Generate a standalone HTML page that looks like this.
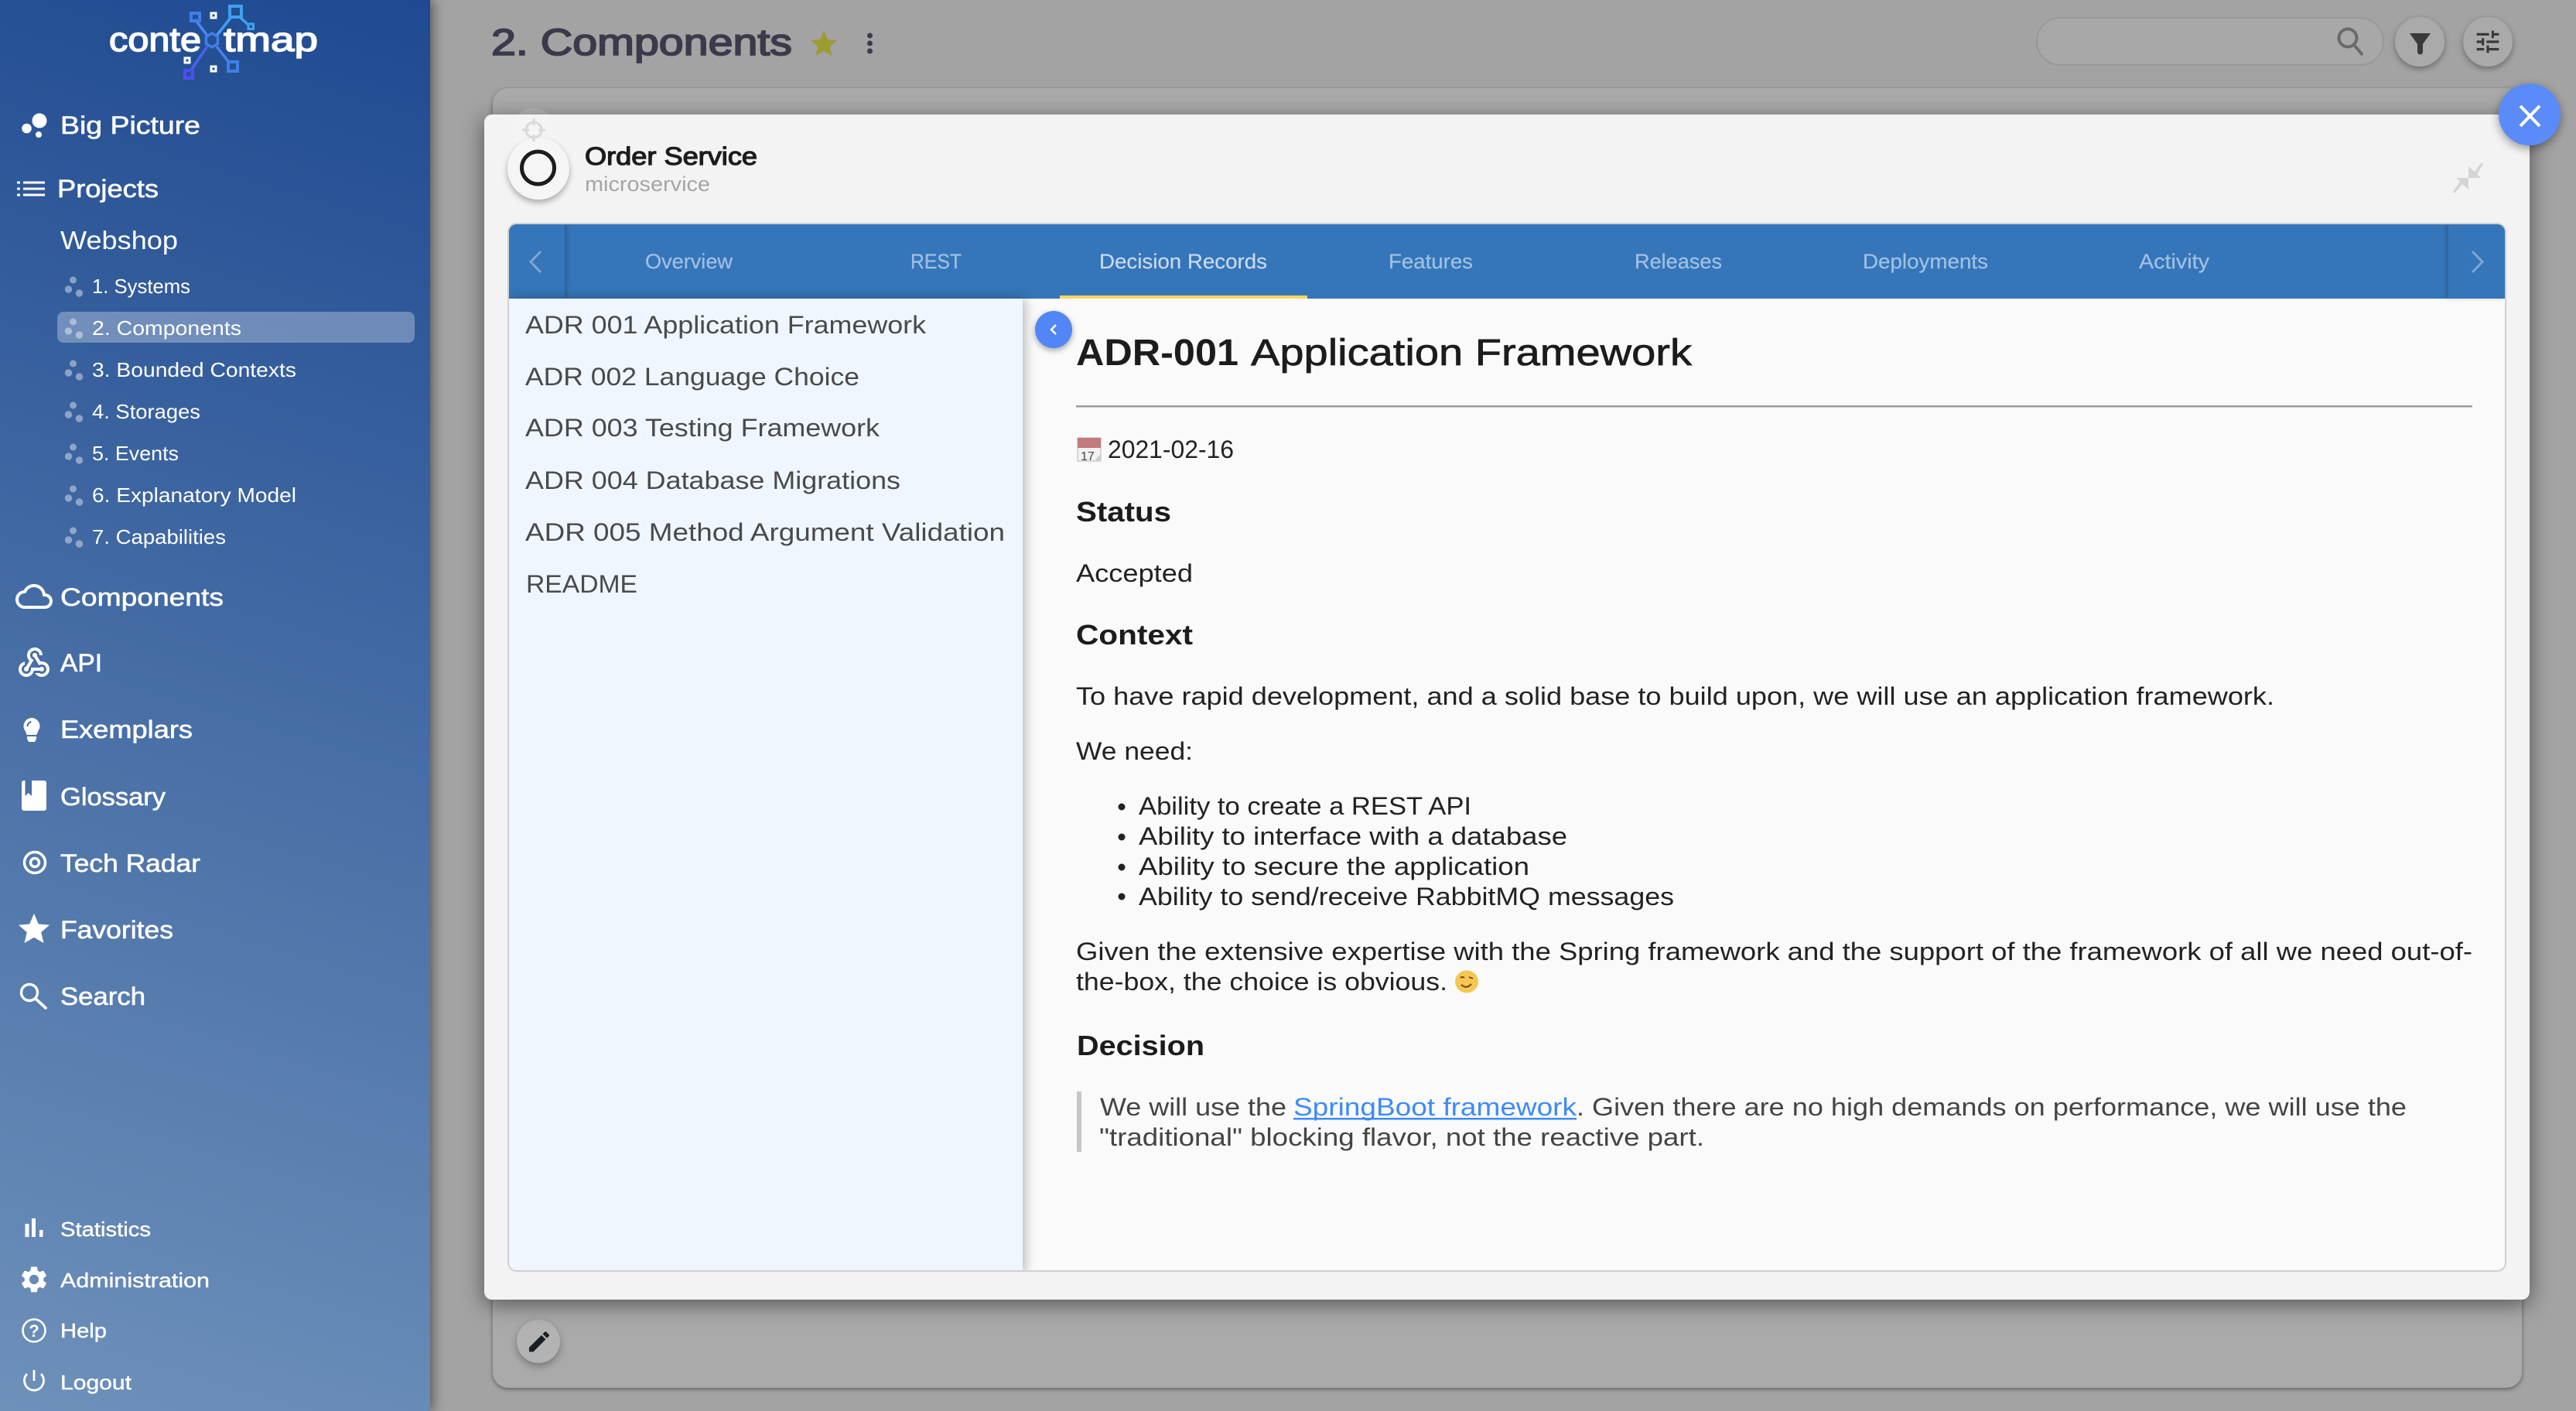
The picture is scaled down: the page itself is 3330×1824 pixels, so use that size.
<!DOCTYPE html>
<html><head><meta charset="utf-8"><title>Order Service</title>
<style>
html,body{margin:0;padding:0;width:3330px;height:1824px;overflow:hidden;background:#a3a3a3}
div{position:absolute;box-sizing:border-box}
svg{position:absolute;left:0;top:0}
text{font-family:"Liberation Sans",sans-serif;white-space:pre}
.nav{font-size:32px;fill:#fff;stroke:#fff;stroke-width:.6}
.sub{font-size:26px;fill:#fff}
.sm{font-size:26px;fill:#fff;stroke:#fff;stroke-width:.4}
.tab{font-size:27px;fill:#a0c0e2;stroke:#a0c0e2;stroke-width:.25}
.li{font-size:32px;fill:#4a4a4a}
.b{font-size:32px;fill:#222}
.q{font-size:32px;fill:#444}
.h{font-size:36px;font-weight:bold;fill:#1c1c1c}
</style></head><body>
<div style="left:556px;top:0;width:2774px;height:1824px;background:#a3a3a3"></div>
<div style="left:637px;top:114px;width:2623px;height:1680px;background:#aaa;border-radius:20px;box-shadow:0 2px 6px rgba(0,0,0,.4)"></div>
<div style="left:2632px;top:22px;width:450px;height:63px;border:2px solid #989898;border-radius:32px;background:#a8a8a8"></div>
<div style="left:3096px;top:22px;width:64px;height:64px;border-radius:50%;background:#aaa;box-shadow:0 3px 8px rgba(0,0,0,.35)"></div>
<div style="left:3184px;top:22px;width:64px;height:64px;border-radius:50%;background:#aaa;box-shadow:0 3px 8px rgba(0,0,0,.35)"></div>
<div style="left:668px;top:1706px;width:56px;height:56px;border-radius:50%;background:#b3b3b3;box-shadow:0 4px 10px rgba(0,0,0,.3)"></div>
<div style="left:0;top:0;width:556px;height:1824px;background:linear-gradient(197deg,#1f4a91 0%,#6e91ba 100%);box-shadow:4px 0 14px rgba(0,0,0,.45)"></div>
<div style="left:74px;top:403px;width:462px;height:40px;border-radius:8px;background:rgba(255,255,255,.3)"></div>
<!-- modal -->
<div style="left:626px;top:148px;width:2644px;height:1532px;background:#f3f3f3;border-radius:10px;box-shadow:0 6px 28px rgba(0,0,0,.5)"></div>
<div style="left:656px;top:288px;width:2584px;height:1356px;border:2px solid #cfcfcf;border-radius:12px;background:#fafafa;overflow:hidden">
  <div style="left:0;top:0;width:2580px;height:96px;background:#3575b9"></div>
  <div style="left:0;top:0;width:72px;height:96px;background:#3575b9;box-shadow:3px 0 5px rgba(0,0,0,.18)"></div>
  <div style="left:2507px;top:0;width:73px;height:96px;background:#3575b9;box-shadow:-3px 0 5px rgba(0,0,0,.18)"></div>
  <div style="left:712px;top:92px;width:320px;height:4px;background:#fdd663"></div>
  <div style="left:0;top:96px;width:664px;height:1260px;background:#eff6ff;box-shadow:3px 0 14px rgba(0,0,0,.28)"></div>
</div>
<div style="left:656px;top:178px;width:80px;height:80px;border-radius:50%;background:#f5f5f5;box-shadow:0 4px 8px rgba(0,0,0,.3)"></div>
<div style="left:662px;top:140px;width:56px;height:56px;border-radius:50%;background:rgba(255,255,255,.12)"></div>
<div style="left:1338px;top:402px;width:48px;height:48px;border-radius:50%;background:#5285f5;box-shadow:0 3px 8px rgba(0,0,0,.35)"></div>
<div style="left:3230px;top:108px;width:80px;height:80px;border-radius:50%;background:#5a8bf8;box-shadow:0 4px 12px rgba(0,0,0,.4)"></div>

<svg width="3330" height="1824" viewBox="0 0 3330 1824" xmlns="http://www.w3.org/2000/svg">
<!-- logo -->
<g fill="none" stroke-width="3.5">
<path d="M252 25L268 46" stroke="#4a8af0"/><path d="M280 46L299 22M310 22L322 33" stroke="#40a0f0"/>
<path d="M268 60L246 92" stroke="#4a62f0"/><path d="M280 60L297 82" stroke="#4a80ee"/>
<path d="M274 43l7.500 4.500v9l-7.500 4.500l-7.500-4.500v-9z" stroke="#3f7fe8"/>
<rect x="247" y="17" width="11" height="10" stroke="#3f7fe8" stroke-width="4"/>
<rect x="297" y="8" width="15" height="14" stroke="#40a0f0" stroke-width="4"/>
<rect x="321" y="31" width="6.500" height="6.500" stroke="#3da5f0" stroke-width="3"/>
<rect x="295" y="80" width="12" height="12" stroke="#3f7fe8" stroke-width="4"/>
<rect x="239" y="91" width="10" height="10" stroke="#4a4ff0" stroke-width="4"/>
<rect x="273" y="17" width="6" height="6" stroke="#fff" stroke-width="3"/>
<rect x="239" y="75" width="6" height="6" stroke="#fff" stroke-width="3"/>
<rect x="273" y="86" width="6" height="6" stroke="#fff" stroke-width="3"/>
</g>
<text x="141" y="66" font-size="44" fill="#fff" stroke="#fff" stroke-width="1.500" textLength="119" lengthAdjust="spacingAndGlyphs">conte</text>
<text x="289" y="66" font-size="44" fill="#fff" stroke="#fff" stroke-width="1.500" textLength="122" lengthAdjust="spacingAndGlyphs">tmap</text>

<!-- nav -->
<g fill="#fff">
<circle cx="51" cy="156" r="9.500"/><circle cx="34.500" cy="166" r="6.300"/><circle cx="50" cy="174" r="4"/>
<rect x="22" y="234.500" width="4" height="3"/><rect x="22" y="242.500" width="4" height="3"/><rect x="22" y="250.500" width="4" height="3"/>
<rect x="30" y="234.500" width="28" height="3"/><rect x="30" y="242.500" width="28" height="3"/><rect x="30" y="250.500" width="28" height="3"/>
</g>
<text class="nav" x="78" y="173" textLength="181" lengthAdjust="spacingAndGlyphs">Big Picture</text>
<text class="nav" x="74" y="255" textLength="131" lengthAdjust="spacingAndGlyphs">Projects</text>
<text x="78" y="322" font-size="33" fill="#fff" textLength="152" lengthAdjust="spacingAndGlyphs">Webshop</text>
<g fill="#fff" fill-opacity=".42">
<g id="d1"><circle cx="94.500" cy="362" r="4.500"/><circle cx="88.500" cy="374" r="4.700"/><circle cx="102.500" cy="379" r="4.700"/></g>
<g transform="translate(0,54)"><circle cx="94.500" cy="362" r="4.500"/><circle cx="88.500" cy="374" r="4.700"/><circle cx="102.500" cy="379" r="4.700"/></g>
<g transform="translate(0,108)"><circle cx="94.500" cy="362" r="4.500"/><circle cx="88.500" cy="374" r="4.700"/><circle cx="102.500" cy="379" r="4.700"/></g>
<g transform="translate(0,162)"><circle cx="94.500" cy="362" r="4.500"/><circle cx="88.500" cy="374" r="4.700"/><circle cx="102.500" cy="379" r="4.700"/></g>
<g transform="translate(0,216)"><circle cx="94.500" cy="362" r="4.500"/><circle cx="88.500" cy="374" r="4.700"/><circle cx="102.500" cy="379" r="4.700"/></g>
<g transform="translate(0,270)"><circle cx="94.500" cy="362" r="4.500"/><circle cx="88.500" cy="374" r="4.700"/><circle cx="102.500" cy="379" r="4.700"/></g>
<g transform="translate(0,324)"><circle cx="94.500" cy="362" r="4.500"/><circle cx="88.500" cy="374" r="4.700"/><circle cx="102.500" cy="379" r="4.700"/></g>
</g>
<text class="sub" x="119" y="379" textLength="127" lengthAdjust="spacingAndGlyphs">1. Systems</text>
<text class="sub" x="119" y="433" textLength="193" lengthAdjust="spacingAndGlyphs">2. Components</text>
<text class="sub" x="119" y="487" textLength="264" lengthAdjust="spacingAndGlyphs">3. Bounded Contexts</text>
<text class="sub" x="119" y="541" textLength="140" lengthAdjust="spacingAndGlyphs">4. Storages</text>
<text class="sub" x="119" y="595" textLength="112" lengthAdjust="spacingAndGlyphs">5. Events</text>
<text class="sub" x="119" y="649" textLength="264" lengthAdjust="spacingAndGlyphs">6. Explanatory Model</text>
<text class="sub" x="119" y="703" textLength="173" lengthAdjust="spacingAndGlyphs">7. Capabilities</text>

<path transform="translate(20,747) scale(2)" fill="#fff" d="M12 6c2.620 0 4.880 1.860 5.390 4.430l.3 1.500 1.530.11c1.560.1 2.780 1.410 2.780 2.960 0 1.650-1.350 3-3 3H6c-2.210 0-4-1.790-4-4 0-2.050 1.530-3.760 3.560-3.970l1.070-.11.5-.95C8.080 7.140 9.940 6 12 6m0-2C9.110 4 6.600 5.640 5.350 8.040 2.340 8.360 0 10.910 0 14c0 3.310 2.690 6 6 6h13c2.760 0 5-2.240 5-5 0-2.640-2.050-4.780-4.650-4.960C18.670 6.590 15.640 4 12 4z"/>
<text class="nav" x="78" y="783" textLength="211" lengthAdjust="spacingAndGlyphs">Components</text>
<path transform="translate(20,833) scale(2)" fill="#fff" d="M10 15h5.880c.27-.31.67-.5 1.120-.5.830 0 1.500.67 1.500 1.500s-.67 1.500-1.500 1.500c-.44 0-.84-.19-1.120-.5H11.900c-.46 2.280-2.480 4-4.900 4-2.760 0-5-2.240-5-5 0-2.420 1.720-4.440 4-4.900v2.070C4.840 13.580 4 14.700 4 16c0 1.650 1.350 3 3 3s3-1.350 3-3v-1zm2.500-11c1.650 0 3 1.350 3 3h2c0-2.760-2.240-5-5-5s-5 2.240-5 5c0 1.430.6 2.710 1.550 3.620l-2.350 3.900C6.020 14.660 5.500 15.270 5.500 16c0 .83.67 1.500 1.500 1.500s1.500-.67 1.500-1.500c0-.16-.02-.31-.07-.45l3.380-5.630C10.490 9.610 9.500 8.420 9.500 7c0-1.650 1.350-3 3-3zM17 13c-.64 0-1.230.2-1.720.54l-3.050-5.070C11.530 8.350 11 7.740 11 7c0-.83.67-1.500 1.500-1.500S14 6.170 14 7c0 .15-.02.29-.06.43l2.190 3.650c.28-.05.57-.08.87-.08 2.760 0 5 2.240 5 5s-2.240 5-5 5c-1.850 0-3.470-1.010-4.330-2.500h2.670c.48.32 1.050.5 1.660.5 1.650 0 3-1.350 3-3s-1.350-3-3-3z"/>
<text class="nav" x="78" y="868" textLength="54" lengthAdjust="spacingAndGlyphs">API</text>
<path fill="#fff" d="M41 928a10.500 11 0 0 1 10.500 11c0 4-3 6-4 11h-13C33.500 945 30.500 943 30.500 939a10.500 11 0 0 1 10.500-11zM35 952h12v3l-2 4h-8l-2-4z"/>
<path d="M35.500 939a6 6 0 0 1 5-6" fill="none" stroke="#4a6ea3" stroke-width="2"/>
<text class="nav" x="78" y="954" textLength="171" lengthAdjust="spacingAndGlyphs">Exemplars</text>
<rect x="28" y="1009" width="32" height="39" rx="3" fill="#fff"/>
<path d="M32.500 1009H41v20l-4.250-4-4.250 4z" fill="#4a70a5"/>
<text class="nav" x="78" y="1041" textLength="136" lengthAdjust="spacingAndGlyphs">Glossary</text>
<circle cx="45" cy="1115" r="13.500" fill="none" stroke="#fff" stroke-width="3.500"/><circle cx="45" cy="1115" r="5.500" fill="none" stroke="#fff" stroke-width="3.500"/>
<text class="nav" x="78" y="1127" textLength="181" lengthAdjust="spacingAndGlyphs">Tech Radar</text>
<path fill="#fff" d="M44 1181l5.800 13.500 14.200 1.200-10.800 9.400 3.300 14-12.500-7.400-12.500 7.400 3.300-14-10.800-9.400 14.200-1.200z"/>
<text class="nav" x="78" y="1213" textLength="146" lengthAdjust="spacingAndGlyphs">Favorites</text>
<circle cx="38" cy="1283" r="10.500" fill="none" stroke="#fff" stroke-width="3.400"/><path d="M46 1291l13 12" stroke="#fff" stroke-width="3.800" stroke-linecap="round"/>
<text class="nav" x="78" y="1299" textLength="110" lengthAdjust="spacingAndGlyphs">Search</text>
<g fill="#fff"><rect x="32.500" y="1582" width="5" height="17"/><rect x="41" y="1575" width="5" height="24"/><rect x="51" y="1590" width="4.500" height="9"/></g>
<text class="sm" x="78" y="1598" textLength="117" lengthAdjust="spacingAndGlyphs">Statistics</text>
<path transform="translate(23.600,1633.600) scale(1.700)" fill="#fff" d="M19.140 12.940c.04-.3.06-.61.06-.94 0-.32-.02-.64-.07-.94l2.030-1.580c.18-.14.23-.41.12-.61l-1.920-3.320c-.12-.22-.37-.29-.59-.22l-2.390.96c-.5-.38-1.030-.7-1.620-.94l-.36-2.540c-.04-.24-.24-.41-.48-.41h-3.840c-.24 0-.43.17-.47.41l-.36 2.540c-.59.24-1.130.57-1.620.94l-2.390-.96c-.22-.08-.47 0-.59.22L2.740 8.870c-.12.21-.08.47.12.61l2.030 1.580c-.05.3-.09.63-.09.94s.02.64.07.94l-2.030 1.580c-.18.14-.23.41-.12.61l1.920 3.320c.12.22.37.29.59.22l2.390-.96c.5.38 1.030.7 1.620.94l.36 2.540c.05.24.24.41.48.41h3.840c.24 0 .44-.17.47-.41l.36-2.540c.59-.24 1.130-.56 1.620-.94l2.390.96c.22.08.47 0 .59-.22l1.920-3.320c.12-.22.07-.47-.12-.61l-2.010-1.580zM12 15.600c-1.980 0-3.600-1.620-3.600-3.600s1.620-3.600 3.600-3.600 3.600 1.620 3.600 3.600-1.620 3.600-3.600 3.600z"/>
<text class="sm" x="78" y="1664" textLength="193" lengthAdjust="spacingAndGlyphs">Administration</text>
<circle cx="44" cy="1720" r="14.500" fill="none" stroke="#fff" stroke-width="2.600"/>
<text x="44" y="1728" text-anchor="middle" font-size="22" font-weight="bold" fill="#fff">?</text>
<text class="sm" x="78" y="1729" textLength="60" lengthAdjust="spacingAndGlyphs">Help</text>
<path d="M35 1776a12.500 12.500 0 1 0 18 0M44 1771v14" fill="none" stroke="#fff" stroke-width="2.800"/>
<text class="sm" x="78" y="1796" textLength="92" lengthAdjust="spacingAndGlyphs">Logout</text>

<!-- header -->
<text x="635" y="71" font-size="48" fill="#3a3a4a" stroke="#3a3a4a" stroke-width="1.800" textLength="389" lengthAdjust="spacingAndGlyphs">2. Components</text>
<path fill="#9c9c33" d="M1065 39l4.900 12 12.100 1-9.300 8.200 2.900 12-10.600-6.500-10.600 6.500 2.900-12L1048 52l12.100-1z"/>
<g fill="#3b3b49"><circle cx="1124.500" cy="46" r="3.500"/><circle cx="1124.500" cy="56" r="3.500"/><circle cx="1124.500" cy="66" r="3.500"/></g>
<circle cx="3035" cy="49" r="11.500" fill="none" stroke="#6a6a6a" stroke-width="4"/><path d="M3043 58l11 13" stroke="#6a6a6a" stroke-width="4"/>
<path fill="#3a3a3a" d="M3115 43h27l-10 14v10a3 3 0 0 1-7 0V57z"/>
<path transform="translate(3196.800,34.800) scale(1.600)" fill="#3a3a3a" d="M3 17v2h6v-2H3zM3 5v2h10V5H3zm10 16v-2h8v-2h-8v-2h-2v6h2zM7 9v2H3v2h4v2h2V9H7zm14 4v-2H11v2h10zm-6-4h2V7h4V5h-4V3h-2v6z"/>
<path d="M3258 137l25 26M3283 137l-25 26" stroke="#fff" stroke-width="4" fill="none"/>
<path fill="#d4d4d4" d="M3191 215v15h16l-5-5 8-13-2-2-9 12zM3191 245v-15h-16l5 5-9 13 2 2 10-12z"/>
<path transform="translate(679.600,1717) scale(1.450)" fill="#1c1f22" d="M3 17.250V21h3.750L17.810 9.940l-3.750-3.750L3 17.250zM20.710 7.040c.39-.39.39-1.020 0-1.410l-2.340-2.340c-.39-.39-1.020-.39-1.410 0l-1.830 1.830 3.750 3.750 1.830-1.830z"/>

<!-- modal head -->
<g fill="none" stroke="#d9d9d9" stroke-width="3"><circle cx="690" cy="168" r="10"/><path d="M690 153v9M690 174v9M675 168h9M696 168h9"/></g>
<ellipse cx="695.500" cy="217" rx="21" ry="21" fill="none" stroke="#1c1c1c" stroke-width="5"/>
<text x="756" y="213" font-size="32" fill="#1c1c1c" stroke="#1c1c1c" stroke-width="1.200" textLength="223" lengthAdjust="spacingAndGlyphs">Order Service</text>
<text x="756" y="247" font-size="27" fill="#a5a5a5" textLength="162" lengthAdjust="spacingAndGlyphs">microservice</text>

<!-- tabs -->
<path d="M699 325l-13 13.500 13 13.500" fill="none" stroke="#7fa6d4" stroke-width="3"/>
<path d="M3196 325l13 13.500-13 13.500" fill="none" stroke="#7fa6d4" stroke-width="3"/>
<text class="tab" x="834" y="347" textLength="113" lengthAdjust="spacingAndGlyphs">Overview</text>
<text class="tab" x="1177" y="347" textLength="66" lengthAdjust="spacingAndGlyphs">REST</text>
<text class="tab" x="1421" y="347" textLength="217" lengthAdjust="spacingAndGlyphs" style="fill:#c8d9ec;stroke:#c8d9ec">Decision Records</text>
<text class="tab" x="1795" y="347" textLength="109" lengthAdjust="spacingAndGlyphs">Features</text>
<text class="tab" x="2113" y="347" textLength="113" lengthAdjust="spacingAndGlyphs">Releases</text>
<text class="tab" x="2408" y="347" textLength="162" lengthAdjust="spacingAndGlyphs">Deployments</text>
<text class="tab" x="2765" y="347" textLength="91" lengthAdjust="spacingAndGlyphs">Activity</text>

<!-- list -->
<text class="li" x="679" y="431" textLength="518" lengthAdjust="spacingAndGlyphs">ADR 001 Application Framework</text>
<text class="li" x="679" y="498" textLength="432" lengthAdjust="spacingAndGlyphs">ADR 002 Language Choice</text>
<text class="li" x="679" y="564" textLength="458" lengthAdjust="spacingAndGlyphs">ADR 003 Testing Framework</text>
<text class="li" x="679" y="632" textLength="485" lengthAdjust="spacingAndGlyphs">ADR 004 Database Migrations</text>
<text class="li" x="679" y="699" textLength="620" lengthAdjust="spacingAndGlyphs">ADR 005 Method Argument Validation</text>
<text class="li" x="680" y="766" textLength="144" lengthAdjust="spacingAndGlyphs">README</text>

<path d="M1366 422l-6 6 6 6" transform="translate(-1,-2)" fill="none" stroke="#fff" stroke-width="2.500"/>

<!-- article -->
<text x="1391" y="472" font-size="48" font-weight="bold" fill="#1c1c1c" textLength="210" lengthAdjust="spacingAndGlyphs">ADR-001</text>
<text x="1617" y="472" font-size="48" fill="#1c1c1c" stroke="#1c1c1c" stroke-width=".7" textLength="570" lengthAdjust="spacingAndGlyphs">Application Framework</text>
<rect x="1391" y="524" width="1805" height="2.500" fill="#999"/>
<rect x="1393" y="566" width="30" height="30" fill="#f2f2f2" stroke="#bbb"/>
<rect x="1393" y="566" width="30" height="13" fill="#c27a7a"/>
<text x="1397" y="595" font-size="16" fill="#444">17</text>
<path d="M1423 586l-8 10h8z" fill="#ccc"/>
<text class="b" x="1432" y="592" textLength="163" lengthAdjust="spacingAndGlyphs">2021-02-16</text>
<text class="h" x="1391" y="674" textLength="123" lengthAdjust="spacingAndGlyphs">Status</text>
<text class="b" x="1391" y="752" textLength="151" lengthAdjust="spacingAndGlyphs">Accepted</text>
<text class="h" x="1391" y="833" textLength="151" lengthAdjust="spacingAndGlyphs">Context</text>
<text class="b" x="1391" y="911" textLength="1549" lengthAdjust="spacingAndGlyphs">To have rapid development, and a solid base to build upon, we will use an application framework.</text>
<text class="b" x="1391" y="982" textLength="151" lengthAdjust="spacingAndGlyphs">We need:</text>
<g fill="#222"><circle cx="1450" cy="1043" r="4.500"/><circle cx="1450" cy="1082" r="4.500"/><circle cx="1450" cy="1121" r="4.500"/><circle cx="1450" cy="1159" r="4.500"/></g>
<text class="b" x="1472" y="1053" textLength="430" lengthAdjust="spacingAndGlyphs">Ability to create a REST API</text>
<text class="b" x="1472" y="1092" textLength="554" lengthAdjust="spacingAndGlyphs">Ability to interface with a database</text>
<text class="b" x="1472" y="1131" textLength="505" lengthAdjust="spacingAndGlyphs">Ability to secure the application</text>
<text class="b" x="1472" y="1170" textLength="692" lengthAdjust="spacingAndGlyphs">Ability to send/receive RabbitMQ messages</text>
<text class="b" x="1391" y="1241" textLength="1805" lengthAdjust="spacingAndGlyphs">Given the extensive expertise with the Spring framework and the support of the framework of all we need out-of-</text>
<text class="b" x="1391" y="1280" textLength="480" lengthAdjust="spacingAndGlyphs">the-box, the choice is obvious.</text>
<ellipse cx="1896" cy="1269" rx="15" ry="14.500" fill="#f4c653"/>
<path d="M1888 1264q3-2 5 0M1899 1263l5 2M1889 1273q7 6 13-1" fill="none" stroke="#6d4a1a" stroke-width="2"/>
<text class="h" x="1392" y="1364" textLength="165" lengthAdjust="spacingAndGlyphs">Decision</text>
<rect x="1392" y="1411" width="6" height="78" fill="#c6c6c6"/>
<text class="q" x="1422" y="1442" textLength="241" lengthAdjust="spacingAndGlyphs">We will use the</text>
<text class="q" x="1672" y="1442" textLength="366" lengthAdjust="spacingAndGlyphs" style="fill:#3d8bf5">SpringBoot framework</text>
<rect x="1672" y="1445" width="366" height="2.500" fill="#3d8bf5"/>
<text class="q" x="2038" y="1442" textLength="1073" lengthAdjust="spacingAndGlyphs">. Given there are no high demands on performance, we will use the</text>
<text class="q" x="1421" y="1481" textLength="782" lengthAdjust="spacingAndGlyphs">"traditional" blocking flavor, not the reactive part.</text>
</svg>
</body></html>
